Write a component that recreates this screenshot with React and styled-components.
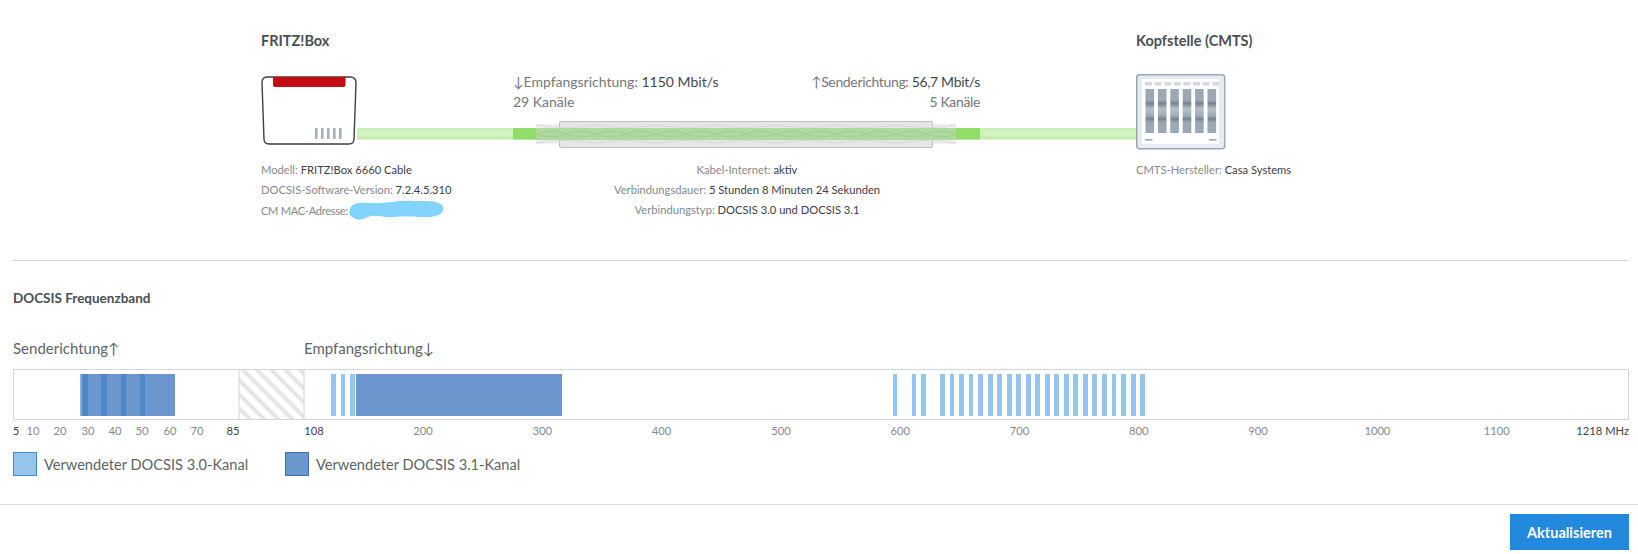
import React from 'react';
import styled, { createGlobalStyle } from 'styled-components';

const GlobalStyle = createGlobalStyle`
  html, body {
    margin: 0;
    padding: 0;
    background: #fff;
  }
  body {
    font-family: "Lato", "Noto Sans", sans-serif;
    color: #5f6468;
  }
`;

const Page = styled.div`
  width: 1638px;
  height: 554px;
  overflow: hidden;
  display: flex;
  flex-direction: column;
`;

const Overview = styled.section`
  height: 261px;
  margin: 0 9px 0 13px;
  padding: 30px 0 0 248px;
  box-sizing: border-box;
  border-bottom: 1px solid #d8d8d8;
`;

const Heads = styled.div`
  display: flex;
  height: 42px;
`;

const Heading = styled.h2`
  margin: 0;
  width: 875px;
  flex: none;
  font-size: 14.5px;
  line-height: 22px;
  font-weight: 700;
  color: #4a4f53;
`;

const Link = styled.div`
  display: flex;
  align-items: flex-start;
`;

const Middle = styled.div`
  width: 779px;
  flex: none;
`;

const Rates = styled.div`
  display: flex;
  justify-content: space-between;
  margin: 0 156px;
  height: 47px;
  font-size: 14px;
  line-height: 20px;
  color: #74787c;
`;

const Rate = styled.div`
  text-align: ${p => (p.$right ? 'right' : 'left')};
  letter-spacing: ${p => (p.$right ? '-0.35px' : '0')};
  strong {
    font-weight: 400;
    color: #43484c;
  }
`;

const Facts = styled.div`
  display: flex;
  margin-top: 10px;
  font-size: 11.2px;
  line-height: 20px;
  color: #85898c;
  strong {
    font-weight: 400;
    color: #3c4145;
  }
`;

const FactsLeft = styled.div`
  width: 301px;
  flex: none;
`;

const FactsCenter = styled.div`
  width: 370px;
  flex: none;
  text-align: center;
`;

const FactsRight = styled.div`
  margin-left: 204px;
`;

const FactRow = styled.div`
  display: flex;
  align-items: center;
`;

const MacLabel = styled.span`
  letter-spacing: -0.35px;
`;

const FritzIcon = styled.svg`
  display: block;
  flex: none;
  margin-top: 4px;
`;

const CableDrawing = styled.svg`
  display: block;
`;

const CmtsIcon = styled.svg`
  display: block;
  flex: none;
  margin-top: 2px;
`;

const Frequency = styled.section`
  flex: none;
  padding: 26px 9px 0 13px;
`;

const SectionTitle = styled.h3`
  margin: 0;
  font-size: 13.5px;
  line-height: 22px;
  font-weight: 700;
  color: #4a4f53;
`;

const Directions = styled.div`
  display: flex;
  margin-top: 28px;
  height: 22px;
  font-size: 15px;
  line-height: 22px;
  color: #5f6468;
`;

const Direction = styled.div`
  width: ${p => p.$width}px;
  flex: none;
`;

const Band = styled.svg`
  display: block;
  margin-top: 10px;
`;

const Axis = styled.div`
  position: relative;
  height: 22px;
  font-size: 11.2px;
  line-height: 21px;
`;

const Tick = styled.span`
  position: absolute;
  top: 0;
  transform: translateX(-50%);
  color: ${p => (p.$strong ? '#3c4145' : '#85898c')};
`;

const EndTick = styled.span`
  position: absolute;
  top: 0;
  right: 0;
  color: #3c4145;
`;

const Legend = styled.div`
  display: flex;
  margin-top: 10px;
  height: 24px;
`;

const LegendItem = styled.div`
  display: flex;
  align-items: center;
  gap: 7px;
  width: 272px;
  font-size: 14.6px;
  color: #5f6468;
`;

const Swatch = styled.span`
  width: 22px;
  height: 22px;
  border: 1px solid ${p => p.$border};
  background: ${p => p.$color};
  flex: none;
`;

const Footer = styled.footer`
  margin-top: 28px;
  border-top: 1px solid #d8d8d8;
  display: flex;
  justify-content: flex-end;
  padding: 9px 9px 0 0;
`;

const RefreshButton = styled.button`
  width: 119px;
  height: 36px;
  border: none;
  background: #2389dc;
  color: #fff;
  font-family: inherit;
  font-size: 14.5px;
  font-weight: 700;
  padding: 0;
`;

const FritzBox = () => (
  <FritzIcon width="96" height="70" viewBox="0 0 96 70">
    <path
      d="M6 1 H89 Q95 1 95 7 L93 63 Q93 68 88 68 H8 Q3 68 3 63 L1 7 Q1 1 6 1 Z"
      fill="#fff"
      stroke="#3d4246"
      strokeWidth="1.4"
    />
    <path d="M12 1 H84.5 V9 Q84.5 11 82.5 11 H14 Q12 11 12 9 Z" fill="#c30d12" />
    {[54, 60, 66, 72, 78].map(x => (
      <rect key={x} x={x} y="52" width="2.6" height="11" fill="#a6b1bd" />
    ))}
  </FritzIcon>
);

const STRANDS = [0, 1, 2, 3, 4, 5, 6];

const Cable = () => (
  <CableDrawing width="779" height="30" viewBox="0 0 779 30">
    <defs>
      <linearGradient id="tube" x1="0" y1="0" x2="0" y2="1">
        <stop offset="0" stopColor="#c8efb4" />
        <stop offset="0.5" stopColor="#d6f4c6" />
        <stop offset="1" stopColor="#bfeaa9" />
      </linearGradient>
    </defs>
    <rect x="0" y="9" width="779" height="11.5" fill="url(#tube)" />
    <rect x="156" y="9" width="23" height="11.5" fill="#90de68" />
    <rect x="599" y="9" width="24" height="11.5" fill="#90de68" />
    <rect x="179" y="5" width="420" height="20" fill="#f0f0f0" />
    <rect x="202.5" y="2.5" width="373" height="26" rx="1.5" fill="#e6e6e6" stroke="#bdbdbd" />
    {STRANDS.map(i => (
      <g key={i} fill="none" strokeWidth="1">
        <path d={`M${179 + i * 60} 6 q30 5 60 0`} stroke="#d8d8d8" />
        <path d={`M${179 + i * 60} 24 q30 -5 60 0`} stroke="#d8d8d8" />
      </g>
    ))}
    <rect x="179" y="9" width="420" height="12" fill="#aedb9d" />
    {STRANDS.map(i => (
      <g key={i} fill="none" strokeWidth="1" stroke="#a2ce92">
        <path d={`M${179 + i * 60} 15 q15 -6 30 0 t30 0`} />
        <path d={`M${179 + i * 60} 15 q15 6 30 0 t30 0`} />
      </g>
    ))}
  </CableDrawing>
);

const Cmts = () => (
  <CmtsIcon width="90" height="76" viewBox="0 0 90 76">
    <defs>
      <linearGradient id="slot" x1="0" y1="0" x2="0" y2="1">
        <stop offset="0" stopColor="#9aa9b5" />
        <stop offset="0.25" stopColor="#9aa9b5" />
        <stop offset="0.33" stopColor="#77858f" />
        <stop offset="0.45" stopColor="#b6c1ca" />
        <stop offset="0.62" stopColor="#9aa9b5" />
        <stop offset="0.68" stopColor="#75838d" />
        <stop offset="0.76" stopColor="#9aa9b5" />
        <stop offset="1" stopColor="#9aa9b5" />
      </linearGradient>
    </defs>
    <rect x="0.75" y="0.75" width="88" height="74" rx="3" fill="#e8ecf1" stroke="#9aa8b6" strokeWidth="1.5" />
    <rect x="6" y="5" width="77" height="65" fill="#fff" />
    {[0, 1, 2, 3, 4, 5, 6, 7].map(i => (
      <rect key={i} x={9 + i * 9.6} y="8" width="7" height="3.5" fill="#d3d9df" />
    ))}
    {[0, 1, 2, 3, 4, 5].map(i => (
      <rect key={i} x={9.5 + i * 12.4} y="15" width="8.6" height="44" fill="url(#slot)" />
    ))}
    <rect x="9" y="65" width="7.5" height="1.6" fill="#98a6b2" />
    <rect x="73" y="65" width="7.5" height="1.6" fill="#98a6b2" />
  </CmtsIcon>
);

const Blur = () => (
  <svg width="96" height="21" viewBox="0 0 96 21">
    <path
      d="M2 9 C4 3 10 2 22 3 C40 4 48 0 66 1 C80 1 92 0 95 7 C97 13 90 17 78 17 C64 17 58 16 46 17 C36 18 32 15 22 16 C18 18 12 21 8 19 C3 17 0 14 2 9 Z"
      fill="#82d3fe"
    />
  </svg>
);

const UPSTREAM_DARK = [
  [69, 6],
  [88, 6],
  [108, 5],
  [127, 5],
];

// 3.0 channels in the lower and upper downstream range, x in the band drawing
const LOW_CHANNELS = [
  [318, 5],
  [328, 4],
  [337, 5],
];

const HIGH_CHANNELS = [
  [880, 4],
  [899, 4],
  [908, 5],
  [927, 5],
  [937, 4],
  [946, 5],
  [956, 4],
  [965, 5],
  [975, 5],
  [984, 5],
  [994, 5],
  [1003, 5],
  [1013, 5],
  [1022, 5],
  [1032, 5],
  [1041, 5],
  [1051, 5],
  [1060, 5],
  [1070, 5],
  [1079, 5],
  [1089, 5],
  [1099, 4],
  [1108, 5],
  [1118, 5],
  [1127, 5],
];

const BAND_W = 1616;

const FrequencyBand = () => (
  <Band width={BAND_W} height="51" viewBox={`0 0 ${BAND_W} 51`}>
    <defs>
      <pattern id="hatch" width="10" height="10" patternUnits="userSpaceOnUse" patternTransform="rotate(-45)">
        <rect width="10" height="10" fill="#fff" />
        <rect width="4" height="10" fill="#e6e6e6" />
      </pattern>
    </defs>
    <rect x="0.5" y="0.5" width={BAND_W - 1} height="50" fill="#fff" stroke="#d6d6d6" />
    <rect x="226" y="1" width="65" height="49" fill="url(#hatch)" />
    <path d="M226 0 V51 M291 0 V51" stroke="#d6d6d6" strokeWidth="1" />
    <rect x="67" y="5" width="95" height="42" fill="#6c97ce" />
    <rect x="67" y="5" width="2" height="42" fill="#86b0dc" />
    {UPSTREAM_DARK.map(([x, w]) => (
      <rect key={x} x={x} y="5" width={w} height="42" fill="#4f88c9" />
    ))}
    {[...LOW_CHANNELS, ...HIGH_CHANNELS].map(([x, w]) => (
      <rect key={x} x={x} y="5" width={w} height="42" fill="#95c5ec" />
    ))}
    <rect x="343" y="5" width="206" height="42" fill="#6c97ce" />
  </Band>
);

const UP_TICKS = [
  [3, '5', true],
  [20, '10'],
  [47, '20'],
  [75, '30'],
  [102, '40'],
  [129, '50'],
  [157, '60'],
  [184, '70'],
  [220, '85', true],
];

const DOWN_TICKS = [200, 300, 400, 500, 600, 700, 800, 900, 1000, 1100];

export default function App() {
  return (
    <Page>
      <GlobalStyle />
      <Overview>
        <Heads>
          <Heading>FRITZ!Box</Heading>
          <Heading>Kopfstelle (CMTS)</Heading>
        </Heads>
        <Link>
          <FritzBox />
          <Middle>
            <Rates>
              <Rate>
                <div>↓Empfangsrichtung: <strong>1150 Mbit/s</strong></div>
                <div>29 Kanäle</div>
              </Rate>
              <Rate $right>
                <div>↑Senderichtung: <strong>56,7 Mbit/s</strong></div>
                <div>5 Kanäle</div>
              </Rate>
            </Rates>
            <Cable />
          </Middle>
          <Cmts />
        </Link>
        <Facts>
          <FactsLeft>
            <div>Modell: <strong>FRITZ!Box 6660 Cable</strong></div>
            <div>DOCSIS-Software-Version: <strong>7.2.4.5.310</strong></div>
            <FactRow><MacLabel>CM MAC-Adresse:</MacLabel><Blur /></FactRow>
          </FactsLeft>
          <FactsCenter>
            <div>Kabel-Internet: <strong>aktiv</strong></div>
            <div>Verbindungsdauer: <strong>5 Stunden 8 Minuten 24 Sekunden</strong></div>
            <div>Verbindungstyp: <strong>DOCSIS 3.0 und DOCSIS 3.1</strong></div>
          </FactsCenter>
          <FactsRight>
            <div>CMTS-Hersteller: <strong>Casa Systems</strong></div>
          </FactsRight>
        </Facts>
      </Overview>
      <Frequency>
        <SectionTitle>DOCSIS Frequenzband</SectionTitle>
        <Directions>
          <Direction $width={291}>Senderichtung↑</Direction>
          <Direction $width={300}>Empfangsrichtung↓</Direction>
        </Directions>
        <FrequencyBand />
        <Axis>
          {UP_TICKS.map(([x, label, strong]) => (
            <Tick key={label} $strong={strong} style={{ left: x }}>{label}</Tick>
          ))}
          <Tick $strong style={{ left: 301 }}>108</Tick>
          {DOWN_TICKS.map((mhz, i) => (
            <Tick key={mhz} style={{ left: 410 + i * 119.3 }}>{mhz}</Tick>
          ))}
          <EndTick>1218 MHz</EndTick>
        </Axis>
        <Legend>
          <LegendItem>
            <Swatch $color="#95c5ec" $border="#3f8bc9" />
            Verwendeter DOCSIS 3.0-Kanal
          </LegendItem>
          <LegendItem>
            <Swatch $color="#6c97ce" $border="#3f6fae" />
            Verwendeter DOCSIS 3.1-Kanal
          </LegendItem>
        </Legend>
      </Frequency>
      <Footer>
        <RefreshButton>Aktualisieren</RefreshButton>
      </Footer>
    </Page>
  );
}
